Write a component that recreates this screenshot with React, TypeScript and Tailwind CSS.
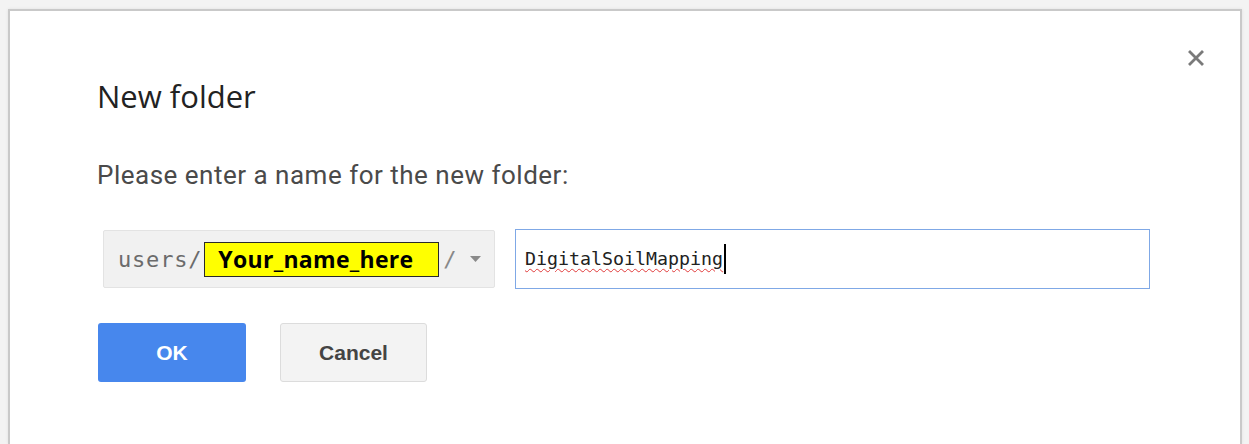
import React from 'react';

const CloseIcon: React.FC = () => (
  <svg width="16" height="16" viewBox="0 0 16 16" className="block">
    <path d="M2 2 L14 14 M14 2 L2 14" stroke="#7a7a7a" strokeWidth="2.8" strokeLinecap="square" />
  </svg>
);

const FolderPathSelect: React.FC = () => (
  <div className="flex h-[58px] w-[392px] items-center rounded-[2px] border border-[#e3e3e3] bg-[#f1f1f1] pl-[14px] font-['DejaVu_Sans_Mono',monospace] text-[22px] text-[#6b6b6b]">
    <span className="tracking-[0.8px]">users/</span>
    <span className="ml-[2px] flex h-[35px] w-[235px] items-center border border-[#2a2a2a] bg-[#ffff00] pl-[13px] font-['Open_Sans',sans-serif] text-[23px] font-bold tracking-[0.3px] text-black">
      Your_name_here
    </span>
    <span className="ml-[4px] text-[#888]">/</span>
    <svg width="11" height="6" viewBox="0 0 11 6" className="ml-[13px]">
      <path d="M0 0 H11 L5.5 6 Z" fill="#8a8a8a" />
    </svg>
  </div>
);

const NameInput: React.FC = () => (
  <div className="flex h-[60px] w-[635px] items-center border border-[#7fa8e6] bg-white pl-[9px] font-['DejaVu_Sans_Mono',monospace] text-[18.3px] text-[#222]">
    <span className="underline decoration-wavy decoration-[#e03a3a] decoration-1 underline-offset-[3px]">DigitalSoilMapping</span>
    <span className="ml-[1px] h-[30px] w-[2px] bg-black" />
  </div>
);

const App: React.FC = () => {
  return (
    <div className="flex h-[444px] w-full flex-col overflow-hidden bg-[#f3f3f3] pl-[8px] pr-[7px] pt-[9px]">
      <div className="flex flex-1 flex-col border-l-2 border-r-2 border-t-2 border-[#c9c9c9] bg-white font-['Roboto',sans-serif] shadow-[0_0_3px_rgba(0,0,0,0.08)]">
        <div className="flex justify-end pr-[34px] pt-[37px]">
          <button className="p-[2px]">
            <CloseIcon />
          </button>
        </div>
        <div className="pl-[87px]">
          <h1 className="mt-[10px] font-['Open_Sans',sans-serif] text-[31px] leading-[36px] text-[#222]">New folder</h1>
          <p className="mt-[45px] text-[26px] leading-[32px] tracking-[0.5px] text-[#4a4a4a]">Please enter a name for the new folder:</p>
          <div className="ml-[6px] mt-[38px] flex items-center gap-[20px]">
            <FolderPathSelect />
            <NameInput />
          </div>
          <div className="ml-[1px] mt-[34px] flex gap-[34px]">
            <button className="h-[59px] w-[148px] rounded-[3px] bg-[#4787ed] font-['Liberation_Sans',sans-serif] text-[21px] font-bold text-white">
              OK
            </button>
            <button className="h-[59px] w-[147px] rounded-[3px] border border-[#dcdcdc] bg-[#f3f3f3] font-['Liberation_Sans',sans-serif] text-[21px] font-bold text-[#444]">
              Cancel
            </button>
          </div>
        </div>
      </div>
    </div>
  );
};

export default App;
